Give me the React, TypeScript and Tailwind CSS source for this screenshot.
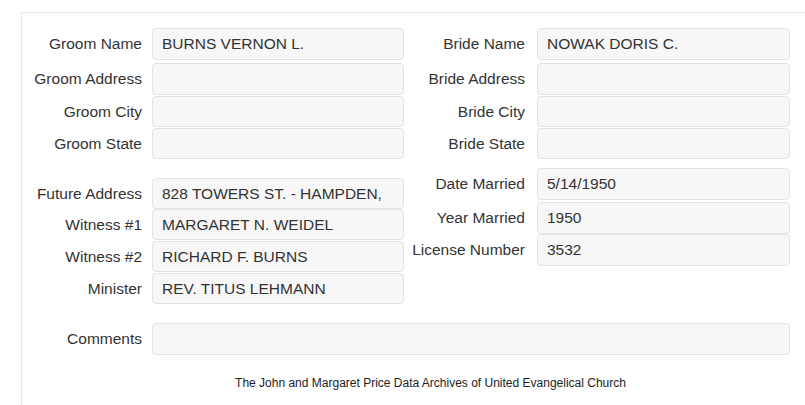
// Marriage record detail view

type Field = { label: string; value: string; h: number; mt: number };

const groomFields: Field[] = [
  { label: "Groom Name", value: "BURNS VERNON L.", h: 32, mt: 0 },
  { label: "Groom Address", value: "", h: 32, mt: 3 },
  { label: "Groom City", value: "", h: 31, mt: 1 },
  { label: "Groom State", value: "", h: 31, mt: 1 },
];

const brideFields: Field[] = [
  { label: "Bride Name", value: "NOWAK DORIS C.", h: 32, mt: 0 },
  { label: "Bride Address", value: "", h: 32, mt: 3 },
  { label: "Bride City", value: "", h: 31, mt: 1 },
  { label: "Bride State", value: "", h: 31, mt: 1 },
];

const peopleFields: Field[] = [
  { label: "Future Address", value: "828 TOWERS ST. - HAMPDEN,", h: 31, mt: 0 },
  { label: "Witness #1", value: "MARGARET N. WEIDEL", h: 31, mt: 0 },
  { label: "Witness #2", value: "RICHARD F. BURNS", h: 31, mt: 1 },
  { label: "Minister", value: "REV. TITUS LEHMANN", h: 31, mt: 1 },
];

const dateFields: Field[] = [
  { label: "Date Married", value: "5/14/1950", h: 32, mt: 0 },
  { label: "Year Married", value: "1950", h: 32, mt: 2 },
  { label: "License Number", value: "3532", h: 32, mt: 0 },
];

function FieldRow({ field, side }: { field: Field; side: "left" | "right" }) {
  return (
    <div
      className="flex items-center"
      style={{ height: field.h, marginTop: field.mt }}
    >
      <div
        className={
          side === "left"
            ? "w-[120px] shrink-0 whitespace-nowrap text-right"
            : "w-[121px] shrink-0 whitespace-nowrap text-right"
        }
      >
        {field.label}
      </div>
      <div
        className={
          side === "left"
            ? "ml-[10px] flex h-full w-[252px] items-center rounded border border-[#e3e3e3] bg-[#f7f7f7] px-[9px]"
            : "ml-[12px] flex h-full w-[253px] items-center rounded border border-[#e3e3e3] bg-[#f7f7f7] px-[9px]"
        }
      >
        {field.value}
      </div>
    </div>
  );
}

export default function App() {
  return (
    <div className="h-[405px] w-full overflow-hidden bg-white pt-[12px] font-['Liberation_Sans',Arial,sans-serif] text-[15.5px] text-[#333]">
      <div className="ml-[21px] h-[400px] border-l border-t border-[#e6e6e6] pt-[15px]">
        <div className="flex">
          <div className="flex flex-col">
            {groomFields.map((f) => (
              <FieldRow key={f.label} field={f} side="left" />
            ))}
          </div>
          <div className="flex flex-col">
            {brideFields.map((f) => (
              <FieldRow key={f.label} field={f} side="right" />
            ))}
          </div>
        </div>

        <div className="mt-[9px] flex items-start">
          <div className="flex flex-col pt-[10px]">
            {peopleFields.map((f) => (
              <FieldRow key={f.label} field={f} side="left" />
            ))}
          </div>
          <div className="flex flex-col">
            {dateFields.map((f) => (
              <FieldRow key={f.label} field={f} side="right" />
            ))}
          </div>
        </div>

        <div className="mt-[19px] flex h-[32px] items-center">
          <div className="w-[120px] shrink-0 text-right">Comments</div>
          <div className="ml-[10px] h-full w-[638px] rounded border border-[#e3e3e3] bg-[#f7f7f7]" />
        </div>

        <p className="mt-[21px] pl-[34px] text-center text-[12px] leading-[14px] text-[#222]">
          The John and Margaret Price Data Archives of United Evangelical Church
        </p>
      </div>
    </div>
  );
}
